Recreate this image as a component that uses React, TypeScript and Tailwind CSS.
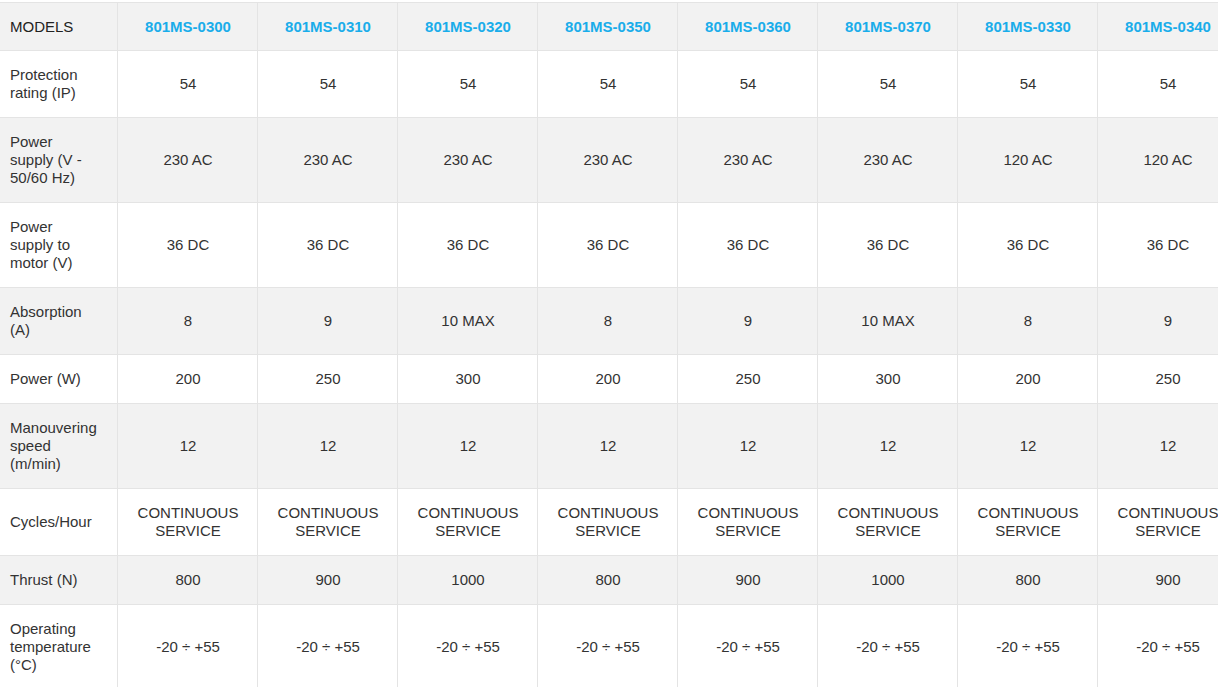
import React from 'react';

const models = [
  '801MS-0300',
  '801MS-0310',
  '801MS-0320',
  '801MS-0350',
  '801MS-0360',
  '801MS-0370',
  '801MS-0330',
  '801MS-0340',
];

const cs = ['CONTINUOUS', 'SERVICE'];

const rows: { label: string[]; values: (string | string[])[] }[] = [
  { label: ['Protection', 'rating (IP)'], values: Array(8).fill('54') },
  {
    label: ['Power', 'supply (V -', '50/60 Hz)'],
    values: ['230 AC', '230 AC', '230 AC', '230 AC', '230 AC', '230 AC', '120 AC', '120 AC'],
  },
  { label: ['Power', 'supply to', 'motor (V)'], values: Array(8).fill('36 DC') },
  { label: ['Absorption', '(A)'], values: ['8', '9', '10 MAX', '8', '9', '10 MAX', '8', '9'] },
  { label: ['Power (W)'], values: ['200', '250', '300', '200', '250', '300', '200', '250'] },
  { label: ['Manouvering', 'speed', '(m/min)'], values: Array(8).fill('12') },
  { label: ['Cycles/Hour'], values: Array(8).fill(cs) },
  { label: ['Thrust (N)'], values: ['800', '900', '1000', '800', '900', '1000', '800', '900'] },
  { label: ['Operating', 'temperature', '(°C)'], values: Array(8).fill('-20 ÷ +55') },
];

const Lines = ({ lines }: { lines: string | string[] }) => {
  const arr = Array.isArray(lines) ? lines : [lines];
  return (
    <div>
      {arr.map((l, i) => (
        <div key={i} className="whitespace-nowrap">
          {l}
        </div>
      ))}
    </div>
  );
};

export default function App() {
  return (
    <div
      className="w-[1218px] h-[687px] overflow-hidden bg-white pt-[2px] text-[15px] leading-[18px] text-[#333333]"
      style={{ fontFamily: '"Liberation Sans", Arial, sans-serif' }}
    >
      <div className="grid w-[1238px] grid-cols-[118px_repeat(8,140px)] border-t border-[#e4e4e4]">
        {/* header */}
        <div className="flex items-center border-r border-b border-[#e4e4e4] bg-[#f2f2f2] py-[15px] pl-[10px] leading-[17px] text-[#222222]">
          MODELS
        </div>
        {models.map((m) => (
          <div
            key={m}
            className="flex items-center justify-center border-r border-b border-[#e4e4e4] bg-[#f2f2f2] py-[15px] pl-px leading-[17px] font-semibold text-[#19adea]"
          >
            {m}
          </div>
        ))}

        {rows.map((row, ri) => {
          const bg = ri % 2 === 1 ? 'bg-[#f2f2f2]' : 'bg-white';
          return (
            <React.Fragment key={ri}>
              <div className={`flex items-center border-r border-b border-[#e4e4e4] py-[15px] pl-[10px] ${bg}`}>
                <Lines lines={row.label} />
              </div>
              {row.values.map((v, vi) => (
                <div
                  key={vi}
                  className={`flex items-center justify-center border-r border-b border-[#e4e4e4] py-[15px] pl-px text-center ${bg}`}
                >
                  <Lines lines={v} />
                </div>
              ))}
            </React.Fragment>
          );
        })}
      </div>
    </div>
  );
}
